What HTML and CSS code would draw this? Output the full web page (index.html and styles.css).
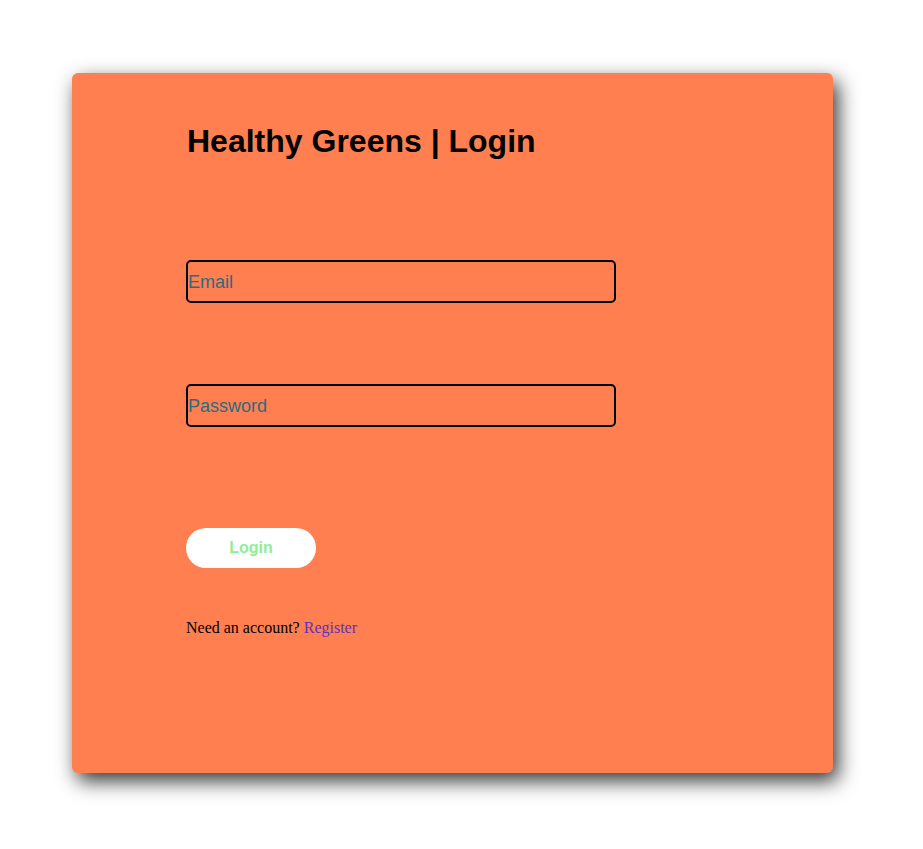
FILE: index.html
```html
<!DOCTYPE html>
<html lang="en">
<head>
<meta charset="utf-8">
<title>Healthy Greens | Login</title>
<link rel="stylesheet" href="styles.css">
</head>
<body>
<main class="card">
  <h1 class="title">Healthy Greens | Login</h1>
  <form class="form">
    <input class="field" type="email" placeholder="Email">
    <input class="field field-pass" type="password" placeholder="Password">
    <button class="btn" type="button">Login</button>
  </form>
  <p class="note">Need an account? <a class="link" href="#">Register</a></p>
</main>
</body>
</html>
```
FILE: styles.css
```css
html, body {
  margin: 0;
  padding: 0;
  background: #ffffff;
}
body {
  padding: 73px 0 76px 72px;
  font-family: "Liberation Serif", "Times New Roman", serif;
}
.card {
  box-sizing: border-box;
  width: 761px;
  height: 700px;
  background: #ff7f50;
  border-radius: 6px;
  box-shadow: 5px 8px 20px rgba(0, 0, 0, 0.8);
  padding: 50px 0 0 114px;
}
.title {
  margin: 0;
  padding-left: 1px;
  font-family: "Liberation Sans", Arial, sans-serif;
  font-weight: bold;
  font-size: 32px;
  line-height: 37px;
  color: #000;
}
.form {
  display: flex;
  flex-direction: column;
  align-items: flex-start;
  margin-top: 100px;
}
.field {
  box-sizing: border-box;
  width: 430px;
  height: 43px;
  margin: 0;
  padding: 2px 1px 0 0;
  border: 2px solid #000;
  border-radius: 5px;
  background: transparent;
  font-family: "Liberation Sans", Arial, sans-serif;
  font-size: 18px;
  color: #2e6b7e;
  outline: none;
}
.field::placeholder {
  color: #2e6b7e;
  opacity: 1;
}
.field-pass {
  margin-top: 81px;
}
.btn {
  margin-top: 101px;
  width: 130px;
  height: 40px;
  border: none;
  border-radius: 20px;
  background: #ffffff;
  color: #90ee90;
  font-family: "Liberation Sans", Arial, sans-serif;
  font-weight: bold;
  font-size: 16px;
  padding: 0;
}
.note {
  margin: 51px 0 0;
  font-size: 16px;
  line-height: 18px;
  color: #000;
}
.link {
  color: #6330b8;
  text-decoration: none;
}
```
